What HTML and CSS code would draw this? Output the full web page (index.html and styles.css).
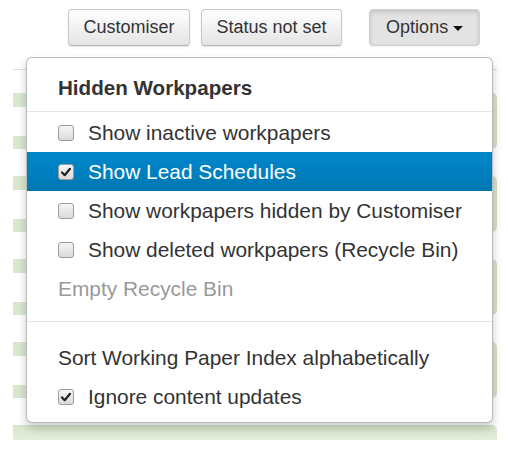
FILE: index.html
```html
<!DOCTYPE html>
<html>
<head>
<meta charset="utf-8">
<link rel="stylesheet" href="styles.css">
</head>
<body>
<div class="page">
  <div class="toolbar">
    <button class="btn">Customiser</button>
    <button class="btn btn-status">Status not set</button>
    <button class="btn btn-options">Options <span class="caret"></span></button>
  </div>

  <div class="sheet">
    <div class="row"><div class="row-main"></div><div class="row-cap"></div></div>
    <div class="row"><div class="row-main"></div><div class="row-cap"></div></div>
    <div class="row"><div class="row-main"></div><div class="row-cap"></div></div>
    <div class="row"><div class="row-main"></div><div class="row-cap"></div></div>
    <div class="row-last"></div>
  </div>

  <div class="dropdown">
    <div class="dd-header">Hidden Workpapers</div>
    <div class="divider"></div>
    <div class="item"><span class="cb"></span><span>Show inactive workpapers</span></div>
    <div class="item active"><span class="cb"><svg width="14" height="14" viewBox="0 0 14 14"><path d="M3 7.4 L5.7 10.2 L11 3.8" fill="none" stroke="#222" stroke-width="2.2" stroke-linecap="round" stroke-linejoin="round"/></svg></span><span>Show Lead Schedules</span></div>
    <div class="item"><span class="cb"></span><span>Show workpapers hidden by Customiser</span></div>
    <div class="item"><span class="cb"></span><span>Show deleted workpapers (Recycle Bin)</span></div>
    <div class="item disabled"><span>Empty Recycle Bin</span></div>
    <div class="divider divider-lower"></div>
    <div class="item"><span>Sort Working Paper Index alphabetically</span></div>
    <div class="item"><span class="cb"><svg width="14" height="14" viewBox="0 0 14 14"><path d="M3 7.4 L5.7 10.2 L11 3.8" fill="none" stroke="#222" stroke-width="2.2" stroke-linecap="round" stroke-linejoin="round"/></svg></span><span>Ignore content updates</span></div>
  </div>
</div>
</body>
</html>
```

FILE: styles.css
```css
html, body {
  margin: 0;
  padding: 0;
  background: #fff;
}

body {
  font-family: "Liberation Sans", Arial, sans-serif;
  color: #333;
  width: 508px;
  height: 452px;
  overflow: hidden;
}

.page {
  position: relative;
  height: 452px;
}

.toolbar {
  display: flex;
  align-items: flex-start;
  padding: 9px 0 0 68px;
  height: 37px;
}

.btn {
  box-sizing: border-box;
  height: 37px;
  padding: 0 14.5px;
  font-family: "Liberation Sans", Arial, sans-serif;
  font-size: 18px;
  line-height: 35px;
  color: #333;
  border: 1px solid #c9c9c9;
  border-bottom-color: #b3b3b3;
  border-radius: 4px;
  background: linear-gradient(#ffffff, #e4e4e4);
  box-shadow: 0 1px 2px rgba(0, 0, 0, 0.1), inset 0 1px 0 rgba(255, 255, 255, 0.4);
  margin: 0;
}

.btn-status {
  margin-left: 11px;
}

.btn-options {
  margin-left: 27px;
  display: flex;
  align-items: center;
  gap: 5px;
  padding: 0 16px 0 16px;
  background: #e3e3e3;
  border-color: #cfcfcf;
  box-shadow: inset 0 2px 4px rgba(0, 0, 0, 0.15), 0 1px 2px rgba(0, 0, 0, 0.05);
}

.caret {
  width: 0;
  height: 0;
  border-top: 5px solid #111;
  border-left: 5px solid transparent;
  border-right: 5px solid transparent;
  margin-top: 1px;
}

.sheet {
  margin: 23px 0 0 13px;
  width: 484px;
  border-top: 1px solid #dedede;
  padding-top: 23px;
}

.row {
  display: flex;
  height: 56px;
  margin-bottom: 27px;
}

.row-main {
  flex: 1;
  box-sizing: border-box;
  border-top: 14px solid #d8e7ce;
  border-bottom: 13px solid #d8e7ce;
  background: #fff;
}

.row-cap {
  width: 5px;
  background: #d3e3c8;
  border-radius: 0 5px 5px 0;
}

.row-last {
  height: 15px;
  background: linear-gradient(#d6e6cb, #e3eedb);
  border-radius: 0 5px 0 0;
}

.dropdown {
  position: absolute;
  top: 57px;
  left: 26px;
  width: 467px;
  box-sizing: border-box;
  background: #fff;
  border: 1px solid rgba(0, 0, 0, 0.27);
  border-radius: 6px;
  box-shadow: 0 5px 10px rgba(0, 0, 0, 0.2);
  padding-bottom: 6px;
}

.dd-header {
  padding: 18px 31px 11px;
  line-height: 24px;
  font-size: 20.6px;
  font-weight: bold;
  color: #333;
}

.divider {
  height: 1px;
  background: #e5e5e5;
  border-bottom: 1px solid #fff;
}

.divider-lower {
  margin: 13px 0 15px;
}

.item {
  display: flex;
  align-items: center;
  gap: 14px;
  height: 39px;
  padding: 0 31px;
  font-size: 20.9px;
  color: #333;
  white-space: nowrap;
}

.item.active {
  background: linear-gradient(#0088cc, #0077b3);
  color: #fff;
}

.item.disabled {
  color: #999;
}

.cb {
  flex: none;
  width: 16px;
  height: 16px;
  box-sizing: border-box;
  border: 1px solid #9c9c9c;
  border-radius: 3px;
  background: linear-gradient(#f6f6f6, #dadada);
  display: flex;
  align-items: center;
  justify-content: center;
}

.cb svg {
  display: block;
}
```
